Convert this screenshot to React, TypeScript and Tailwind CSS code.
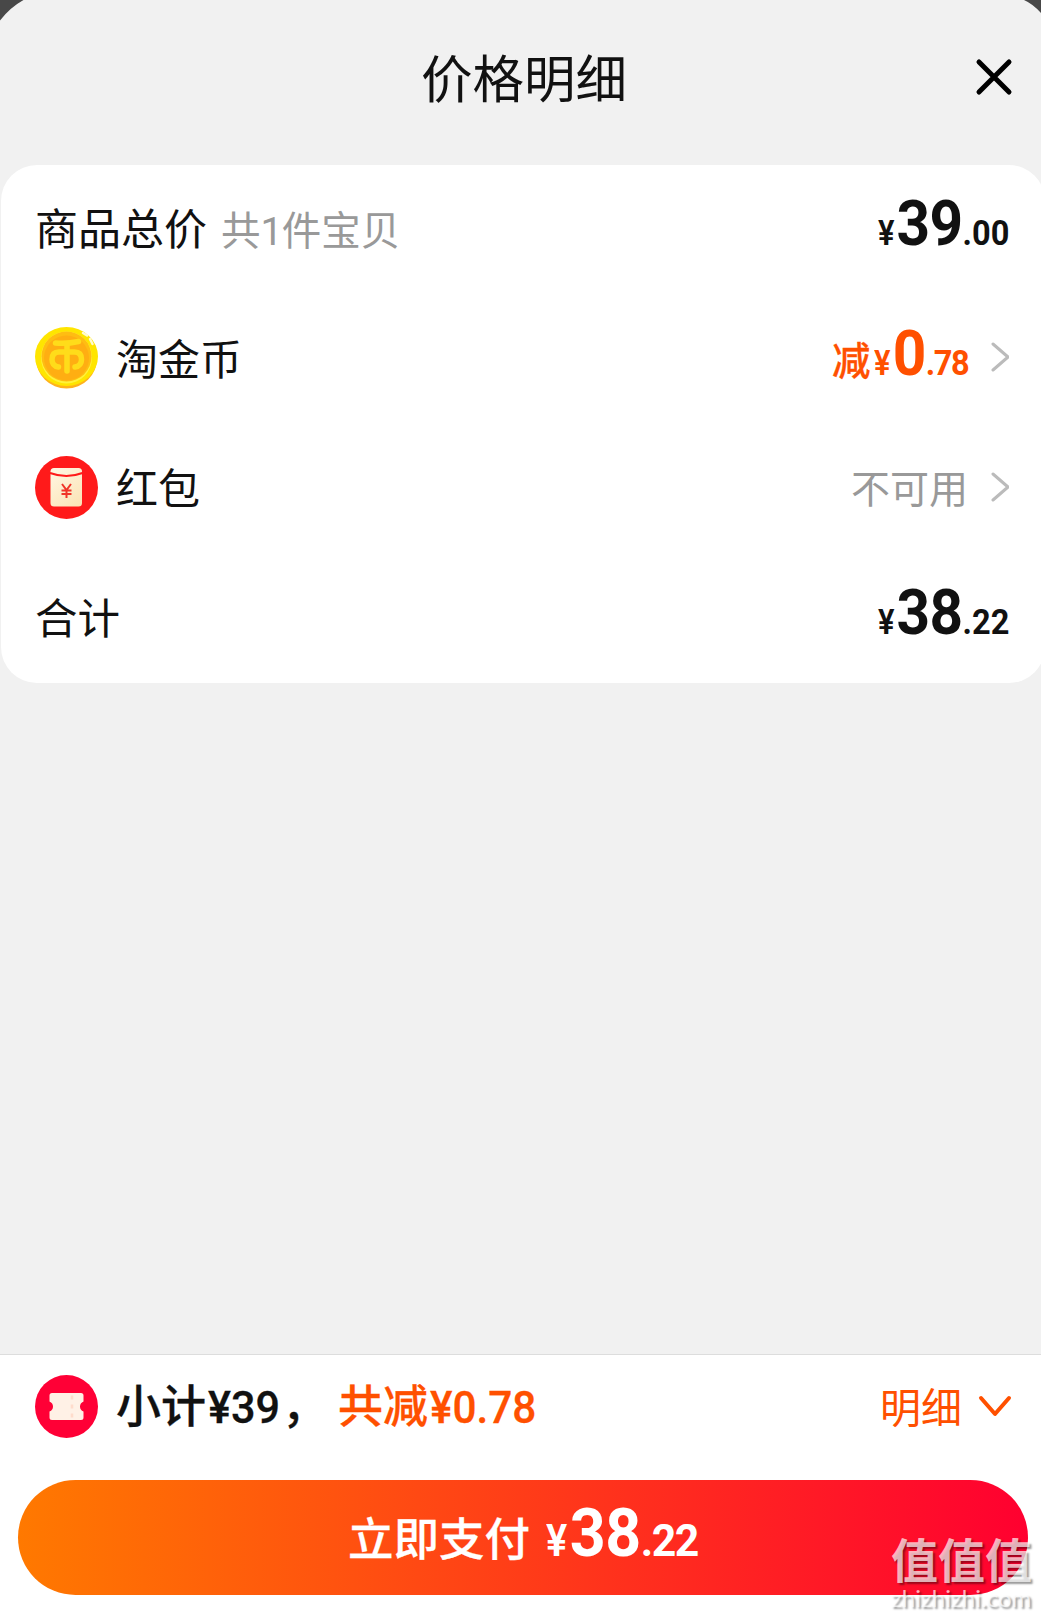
import React from "react";

function Price({ whole, cents, prefix }: { whole: string; cents: string; prefix?: string }) {
  return (
    <div className="flex items-baseline whitespace-nowrap pb-[12px] font-['Roboto','Noto_Sans_CJK_SC',sans-serif] leading-none">
      {prefix && <span className="mr-[-4px] text-[38.5px] font-medium [-webkit-text-stroke:0.3px_currentColor]">{prefix}</span>}
      <span className="flex origin-right scale-x-[0.93] items-baseline">
        <span className="w-[20px] text-[35px] font-semibold"><span className="inline-block origin-left scale-x-[0.95]">¥</span></span>
        <span className="text-[63px] font-bold tracking-[-0.6px]">{whole}</span>
        <span className={"text-[35px] font-bold " + (prefix ? "tracking-[-1.5px]" : "tracking-normal")}>.{cents}</span>
      </span>
    </div>
  );
}

function ChevronRight() {
  return (
    <svg width="19" height="30" viewBox="0 0 19 30" fill="none" stroke="#bbbbbb" strokeWidth="3" strokeLinecap="round" strokeLinejoin="round">
      <path d="M3 2L18 15L3 28" />
    </svg>
  );
}

function CoinIcon() {
  return (
    <svg width="63" height="63" viewBox="0 0 63 63" fill="none">
      <ellipse cx="31.5" cy="31.5" rx="30.5" ry="30" fill="#ffb21c" />
      <ellipse cx="31.5" cy="29.5" rx="31.5" ry="29.5" fill="#ffe500" />
      <ellipse cx="31.5" cy="30.5" rx="25.5" ry="26" fill="#fff23c" />
      <circle cx="31.5" cy="29.5" r="25" fill="#ffbd12" />
      <circle cx="31.5" cy="31" r="22.5" fill="#ffae12" />
      <path d="M48 6L52 8.5M55 12L57.500 17" stroke="#fffbd0" strokeWidth="2.5" strokeLinecap="round" />
      <g stroke="#ffdc1a" strokeWidth="5.5" strokeLinecap="round" strokeLinejoin="round">
        <path d="M20.5 16Q32 17 43.5 14.5" />
        <path d="M32 17V44" />
        <path d="M23.5 40Q17 39 17 32.5Q17 25 24 25H39.5Q46.5 25 46.5 32.5Q46.5 39 40 40" />
      </g>
    </svg>
  );
}

function RedPacketIcon() {
  return (
    <svg width="63" height="63" viewBox="0 0 63 63" fill="none">
      <defs>
        <linearGradient id="packet" x1="16" y1="12" x2="47" y2="50" gradientUnits="userSpaceOnUse">
          <stop stopColor="#fff7e4" />
          <stop offset="1" stopColor="#fbe3b4" />
        </linearGradient>
      </defs>
      <circle cx="31.5" cy="31.5" r="31.5" fill="#ff1a1a" />
      <rect x="15.5" y="12" width="31.5" height="38.5" rx="3.5" fill="url(#packet)" />
      <path d="M15 17Q31.5 23 47.5 17" stroke="#ff1a1a" strokeWidth="2" />
      <path d="M27 28L31.5 34L36 28M31.5 34V42M26.5 34.5H36.5M26.5 38H36.5" stroke="#f03428" strokeWidth="2" />
    </svg>
  );
}

function CouponIcon() {
  return (
    <svg width="63" height="63" viewBox="0 0 63 63" fill="none">
      <circle cx="31.5" cy="31.5" r="31.5" fill="#ff0036" />
      <path d="M17 18H46Q48.5 18 48.5 20.5V26.5Q45 28 45 31.5Q45 35 48.5 36.5V42.5Q48.5 45 46 45H17Q14.5 45 14.5 42.5V36.5Q18 35 18 31.5Q18 28 14.5 26.5V20.5Q14.5 18 17 18Z" fill="#fff1e6" />
      <path d="M37 20.5V43" stroke="#ffdccb" strokeWidth="2.5" strokeDasharray="4 5" />
    </svg>
  );
}

const rowClass = "flex h-[129.5px] items-center justify-between pl-[34px] pr-[36px]";

export default function App() {
  return (
    <div className="relative flex h-[1617px] w-[1041px] flex-col overflow-hidden bg-[#f1f1f1] font-['Noto_Sans_CJK_SC',sans-serif] text-[#111111]">
      <svg className="absolute left-0 top-0" width="26" height="22" viewBox="0 0 26 22"><path d="M0 0H23.5Q10 7.5 0 20.5Z" fill="#484848" /></svg>
      <svg className="absolute right-0 top-0" width="26" height="22" viewBox="0 0 26 22"><path d="M26 0H9Q18 4 26 13Z" fill="#484848" /></svg>

      <header className="flex h-[165px] shrink-0 items-start pr-[28px] pt-[40px]">
        <h1 className="ml-[421px] flex-1 text-[51.5px] leading-[72px]">价格明细</h1>
        <svg className="mt-[18px]" width="38" height="38" viewBox="0 0 38 38" stroke="#000" strokeWidth="5" strokeLinecap="round"><path d="M4 4L34 34M34 4L4 34" /></svg>
      </header>

      <main className="-mr-1 ml-px shrink-0 rounded-[36px] bg-white text-[42px] leading-[60px]">
        <div className={rowClass}>
          <div className="flex items-baseline pb-[2px]">
            <span className="text-[43px]">商品总价</span>
            <span className="ml-[14px] text-[39.5px] text-[#999999]">共<span className="tracking-[-1px] font-['Roboto',sans-serif]">1</span>件宝贝</span>
          </div>
          <Price whole="39" cents="00" />
        </div>
        <div className={rowClass}>
          <div className="flex items-center gap-[18px] pb-[2px]"><CoinIcon /><span className="pb-[3px]">淘金币</span></div>
          <div className="flex items-center gap-[22px] text-[#ff5000]">
            <Price whole="0" cents="78" prefix="减" />
            <div className="pb-[4px]"><ChevronRight /></div>
          </div>
        </div>
        <div className={rowClass}>
          <div className="flex items-center gap-[18px] pb-[2px]"><RedPacketIcon /><span className="pb-[4px]">红包</span></div>
          <div className="flex items-center gap-[22px] pb-[3px] text-[39px] text-[#999999]"><span className="pb-[3px]">不可用</span><ChevronRight /></div>
        </div>
        <div className={rowClass}>
          <span className="pb-[5px] text-[42.5px]">合计</span>
          <Price whole="38" cents="22" />
        </div>
      </main>

      <footer className="mt-auto flex h-[263px] shrink-0 flex-col border-t border-[#dddddd] bg-white px-[18px]">
        <div className="flex h-[102px] items-center pl-[17px] pr-[11px] font-['Roboto','Noto_Sans_CJK_SC',sans-serif] text-[45px] font-medium">
          <CouponIcon />
          <div className="ml-[18px] flex w-[222px] items-baseline whitespace-nowrap pt-[3px] [-webkit-text-stroke:0.3px_currentColor]">
            <span>小计</span>
            <span className="ml-[2px] inline-block w-[74px] origin-left scale-x-[0.96]">¥39</span>
            <span>，</span>
          </div>
          <div className="flex flex-1 items-baseline whitespace-nowrap pt-[3px] text-[#ff5000] [-webkit-text-stroke:0.3px_currentColor]">
            <span>共减</span>
            <span className="ml-[2px] inline-block origin-left scale-x-[0.94]">¥0.78</span>
          </div>
          <span className="font-['Noto_Sans_CJK_SC',sans-serif] text-[41px] font-normal text-[#ff5000]">明细</span>
          <svg className="ml-[16px]" width="34" height="24" viewBox="0 0 34 24" fill="none" stroke="#ff5000" strokeWidth="4" strokeLinecap="round" strokeLinejoin="round"><path d="M3 4L17 20L31 4" /></svg>
        </div>
        <button className="mt-[23px] flex h-[115px] w-[1010px] items-baseline rounded-full bg-linear-to-r/srgb from-[#ff7900] to-[#ff0030] pl-[330px] text-left font-['Roboto','Noto_Sans_CJK_SC',sans-serif] leading-[107px] text-white">
          <span className="w-[198px] text-[45.5px] font-medium [-webkit-text-stroke:0.3px_currentColor]">立即支付</span>
          <span className="flex origin-left scale-x-[0.95] items-baseline">
            <span className="w-[25px] text-[45px] font-semibold"><span className="inline-block origin-left scale-x-[0.93]">¥</span></span>
            <span className="text-[66px] font-bold tracking-[-0.5px]">38</span>
            <span className="text-[45px] font-bold tracking-[-1.5px]">.22</span>
          </span>
        </button>
      </footer>

      <div className="absolute left-[891px] top-[1531px] whitespace-nowrap text-white/70 [text-shadow:2px_2px_2px_rgba(0,0,0,0.4)]">
        <div className="text-[47px] font-bold leading-[54px]">值值值</div>
        <div className="font-['Lato',sans-serif] text-[24px] leading-[26px]">zhizhizhi.com</div>
      </div>
    </div>
  );
}
